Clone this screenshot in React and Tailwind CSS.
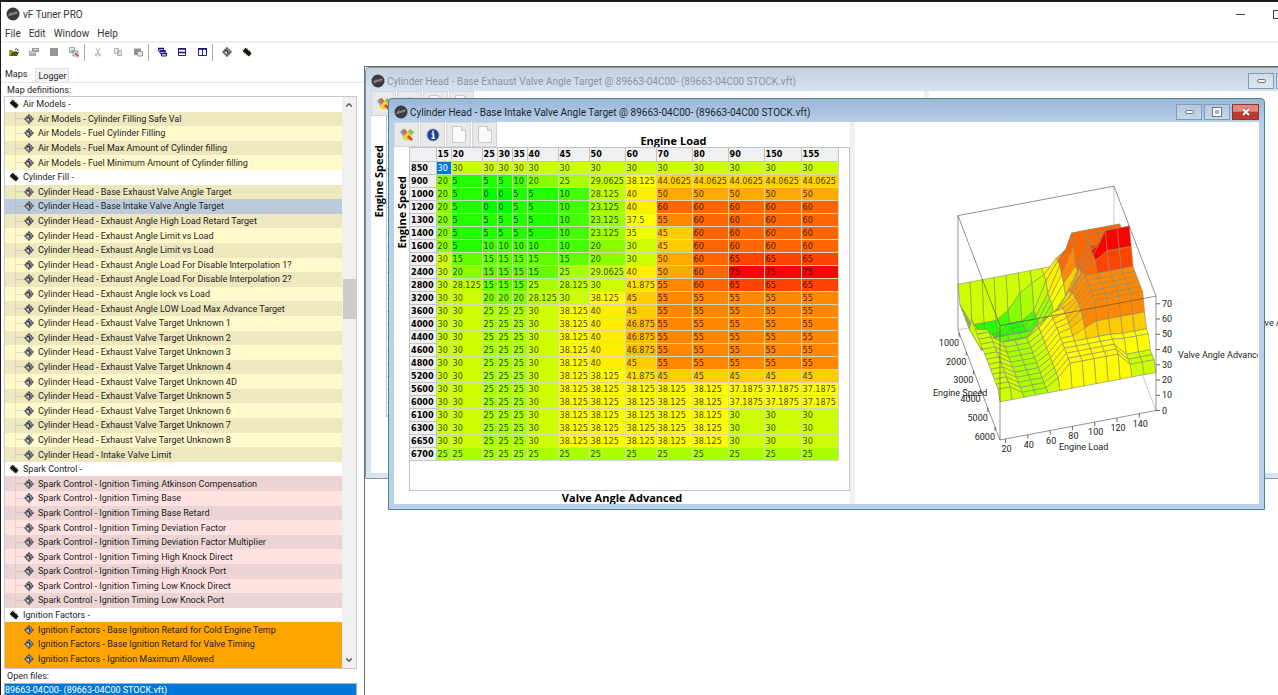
import { ChevronDown, ChevronUp } from 'lucide-react';

const LOADS = [15, 20, 25, 30, 35, 40, 45, 50, 60, 70, 80, 90, 150, 155];

const ROWS = [
    [850, 30, 30, 30, 30, 30, 30, 30, 30, 30, 30, 30, 30, 30, 30],
    [900, 20, 5, 5, 5, 10, 20, 25, 29.0625, 38.125, 44.0625, 44.0625, 44.0625, 44.0625, 44.0625],
    [1000, 20, 5, 0, 0, 5, 5, 10, 28.125, 40, 50, 50, 50, 50, 50],
    [1200, 20, 5, 0, 0, 5, 5, 10, 23.125, 40, 60, 60, 60, 60, 60],
    [1300, 20, 5, 5, 5, 5, 5, 10, 23.125, 37.5, 55, 60, 60, 60, 60],
    [1400, 20, 5, 5, 5, 5, 5, 10, 23.125, 35, 45, 60, 60, 60, 60],
    [1600, 20, 5, 10, 10, 10, 10, 10, 20, 30, 45, 60, 60, 60, 60],
    [2000, 30, 15, 15, 15, 15, 15, 15, 20, 30, 50, 60, 65, 65, 65],
    [2400, 30, 20, 15, 15, 15, 15, 25, 29.0625, 40, 50, 60, 75, 75, 75],
    [2800, 30, 28.125, 15, 15, 15, 25, 28.125, 30, 41.875, 55, 60, 65, 65, 65],
    [3200, 30, 30, 20, 20, 20, 28.125, 30, 38.125, 45, 55, 55, 55, 55, 55],
    [3600, 30, 30, 25, 25, 25, 30, 38.125, 40, 45, 55, 55, 55, 55, 55],
    [4000, 30, 30, 25, 25, 25, 30, 38.125, 40, 46.875, 55, 55, 55, 55, 55],
    [4400, 30, 30, 25, 25, 25, 30, 38.125, 40, 46.875, 55, 55, 55, 55, 55],
    [4600, 30, 30, 25, 25, 25, 30, 38.125, 40, 46.875, 55, 55, 55, 55, 55],
    [4800, 30, 30, 25, 25, 25, 30, 38.125, 40, 45, 55, 55, 55, 55, 55],
    [5200, 30, 30, 25, 25, 25, 30, 38.125, 38.125, 41.875, 45, 45, 45, 45, 45],
    [5600, 30, 30, 25, 25, 25, 30, 38.125, 38.125, 38.125, 38.125, 38.125, 37.1875, 37.1875, 37.1875],
    [6000, 30, 30, 25, 25, 25, 30, 38.125, 38.125, 38.125, 38.125, 38.125, 37.1875, 37.1875, 37.1875],
    [6100, 30, 30, 25, 25, 25, 30, 38.125, 38.125, 38.125, 38.125, 38.125, 30, 30, 30],
    [6300, 30, 30, 25, 25, 25, 30, 38.125, 38.125, 38.125, 38.125, 38.125, 30, 30, 30],
    [6650, 30, 30, 25, 25, 25, 30, 38.125, 38.125, 38.125, 38.125, 38.125, 30, 30, 30],
    [6700, 25, 25, 25, 25, 25, 25, 25, 25, 25, 25, 25, 25, 25, 25],
];

const GROUPS = [
    {
        name: 'Air Models',
        prefix: 'Air Models',
        odd: 'bg-[#ede8bd]',
        even: 'bg-[#fff9cc]',
        items: ['Cylinder Filling Safe Val', 'Fuel Cylinder Filling', 'Fuel Max Amount of Cylinder filling', 'Fuel Minimum Amount of Cylinder filling'],
    },
    {
        name: 'Cylinder Fill',
        prefix: 'Cylinder Head',
        odd: 'bg-[#ede8bd]',
        even: 'bg-[#fff9cc]',
        selected: 1,
        items: [
            'Base Exhaust Valve Angle Target',
            'Base Intake Valve Angle Target',
            'Exhaust Angle High Load Retard Target',
            'Exhaust Angle Limit vs Load',
            'Exhaust Angle Limit vs Load',
            'Exhaust Angle Load For Disable Interpolation 1?',
            'Exhaust Angle Load For Disable Interpolation 2?',
            'Exhaust Angle lock vs Load',
            'Exhaust Angle LOW Load Max Advance Target',
            'Exhaust Valve Target Unknown 1',
            'Exhaust Valve Target Unknown 2',
            'Exhaust Valve Target Unknown 3',
            'Exhaust Valve Target Unknown 4',
            'Exhaust Valve Target Unknown 4D',
            'Exhaust Valve Target Unknown 5',
            'Exhaust Valve Target Unknown 6',
            'Exhaust Valve Target Unknown 7',
            'Exhaust Valve Target Unknown 8',
            'Intake Valve Limit',
        ],
    },
    {
        name: 'Spark Control',
        prefix: 'Spark Control',
        odd: 'bg-[#ecd4d2]',
        even: 'bg-[#ffe3e1]',
        items: [
            'Ignition Timing Atkinson Compensation',
            'Ignition Timing Base',
            'Ignition Timing Base Retard',
            'Ignition Timing Deviation Factor',
            'Ignition Timing Deviation Factor Multiplier',
            'Ignition Timing High Knock Direct',
            'Ignition Timing High Knock Port',
            'Ignition Timing Low Knock Direct',
            'Ignition Timing Low Knock Port',
        ],
    },
    {
        name: 'Ignition Factors',
        prefix: 'Ignition Factors',
        odd: 'bg-[#ffa500]',
        even: 'bg-[#ffa500]',
        items: ['Base Ignition Retard for Cold Engine Temp', 'Base Ignition Retard for Valve Timing', 'Ignition Maximum Allowed'],
    },
];

// green at 0, yellow halfway, red at 75
const heat = (v) => {
    const t = v / 37.5;
    const r = Math.round(Math.min(1, t) * 255);
    const g = Math.round(Math.min(1, 2 - t) * 255);
    return `rgb(${r},${g},0)`;
};

const Logo = () => (
    <svg viewBox="0 0 14 14" className="size-[14px] shrink-0">
        <circle cx="7" cy="7" r="6.5" fill="#3c3c3f" />
        <path d="M2 8.500 Q3 5 5 5.500 T8.500 5 Q11 4 12 5.500 Q11 7.500 8.500 7.500 T4.500 9 Q2.500 9.500 2 8.500Z" fill="#77777b" />
        <path d="M3.500 7.800 L5.500 6.500 L7 7.200 L8.500 6 L11 5.700" stroke="#98989c" strokeWidth=".7" fill="none" />
    </svg>
);

const Chip = () => (
    <svg viewBox="0 0 10 10" className="size-[10px] shrink-0">
        <path d="M3.500 .8 L9.600 6.200 L7 9.400 L.6 4Z" fill="#14140a" />
        <path d="M5 1.400 l1.200 1 M7.200 3.400 l1.200 1 M1.800 5.600 l1.200 1 M4 7.600 l1.200 1" stroke="#6b651c" strokeWidth=".8" />
    </svg>
);

const Target = () => (
    <svg viewBox="0 0 10 10" className="size-[10px] shrink-0">
        <circle cx="5" cy="5" r="3.400" fill="#9c9ca2" stroke="#5a5a5e" strokeWidth="1" />
        <path d="M5 0 V2 M5 8 V10 M0 5 H2.500 M7.500 5 H10" stroke="#4a4a4c" strokeWidth="1.200" />
        <path d="M3 3.400 L5.400 4 L6.200 7" stroke="#2c2c2e" strokeWidth="1.200" fill="none" />
        <circle cx="4.200" cy="5.600" r=".8" fill="#e8e8ec" />
    </svg>
);

const TOOLS = [
    [
        ['Open', <><path d="M0 3h3l1 1h4v1H3L1 9H0z" fill="#a39b2c" /><path d="M3 5h7L8 9H1z" fill="#56530c" /><path d="M6 2.500q2-1.500 3 .5v1" stroke="#333" fill="none" /></>],
        ['Close', <><path d="M0 4h7v5H0z" fill="#ababab" /><path d="M3 1h7v4H7V4H3z" fill="#999" /><path d="M1.500 5.500h4M4.500 2.500h4" stroke="#e8e8e8" /></>],
        ['Save', <path d="M1 1h8v8H1z" fill="#969696" />],
        ['Compare', <><path d="M.5.5h5v5h-5z" fill="#dfeee8" stroke="#6aa39a" strokeWidth=".8" /><path d="M4 4h5v5H4z" fill="#e3d8ea" stroke="#8c7dac" strokeWidth=".8" /><path d="M6 6l3.500 3.500" stroke="#d23a3a" strokeWidth="1.400" /><path d="M2 4h3" stroke="#3aa655" /></>],
    ],
    [
        ['Cut', <><path d="M3 1l3 6M7 1L4 7" stroke="#b0b0b0" /><circle cx="3.200" cy="8" r="1" fill="none" stroke="#b0b0b0" /><circle cx="6.800" cy="8" r="1" fill="none" stroke="#b0b0b0" /></>],
        ['Copy', <><path d="M1.500 1.500h4v5h-4zM4.500 3.500h4v5h-4z" fill="#efefef" stroke="#adadad" /><path d="M5.500 5.500h2M5.500 7h2" stroke="#bbb" strokeWidth=".6" /></>],
        ['Paste', <><path d="M1 1.500h7v6.500H1z" fill="#8f8f8f" /><path d="M4.500 4.500h5v4.500h-5z" fill="#e8e8e8" stroke="#9a9a9a" /></>],
    ],
    [
        ['Cascade', <><path d="M1.500 1.500h5v2.500h-5zM3 4h5v2.500H3zM4.500 6.500h5V9h-5z" fill="#dfe3f5" stroke="#22228a" /><path d="M1 1.500h6M3 4h6M4 6.500h6" stroke="#14148a" strokeWidth="1.400" /></>],
        ['Tile horizontally', <><path d="M1.500 1.500h7v7h-7z" fill="#fff" stroke="#22228a" /><path d="M1 2h8M1 5.500h8" stroke="#14148a" strokeWidth="1.600" /></>],
        ['Tile vertically', <><path d="M1.500 1.500h8v7h-8zM5.500 1.500v7" fill="#fff" stroke="#22228a" /><path d="M1 2h9" stroke="#14148a" strokeWidth="1.600" /></>],
    ],
];

const Toolbar = () => (
    <div className="flex h-[25px] items-center border-t-2 border-[#f0f0f0] pb-[5px] pl-[3px]">
        {TOOLS.map((group, g) => (
            <div key={g} className="flex items-center">
                {group.map(([label, art]) => (
                    <button key={label} aria-label={label} className="flex w-5 justify-center">
                        <svg viewBox="0 0 10 10" className="size-[10px]" fill="none">{art}</svg>
                    </button>
                ))}
                <span className="mr-[3px] h-[17px] w-px bg-[#a8a8a8]" />
            </div>
        ))}
        <button aria-label="Maps" className="ml-px flex w-5 justify-center"><Target /></button>
        <button aria-label="ECU" className="flex w-5 justify-center"><Chip /></button>
    </div>
);

const MapTree = () => (
    <div className="mr-[7px] ml-[3px] flex min-h-0 flex-1 border border-[#c3cbd3]">
        <ul className="flex flex-1 flex-col overflow-hidden">
            {GROUPS.map((group) => [
                <li key={group.name} className="flex min-h-0 flex-1 items-center gap-1 pl-1">
                    <Chip />
                    <button>{group.name} -</button>
                </li>,
                ...group.items.map((item, i) => (
                    <li
                        key={group.name + i}
                        className={`flex min-h-0 flex-1 items-center pl-[10px] ${i === group.selected ? 'bg-[#bccbdc]' : i % 2 ? group.even : group.odd}`}
                    >
                        <span className="h-full w-px bg-gray-400/20" />
                        <span className="h-px w-2 bg-gray-400/30" />
                        <Target />
                        <button className="ml-1 text-left whitespace-nowrap">{group.prefix} - {item}</button>
                    </li>
                )),
            ])}
            <li className="h-[2px] bg-[#ffa500]" />
        </ul>
        <div className="flex w-[14px] flex-col items-center bg-[#f0f0f0]">
            <button aria-label="Scroll up" className="flex h-4 items-center"><ChevronUp size={10} strokeWidth={3} color="#555" /></button>
            <div className="flex-[166]" />
            <div className="w-[13px] flex-[40] bg-[#cdcdcd]" />
            <div className="flex-[332]" />
            <button aria-label="Scroll down" className="flex h-4 items-center"><ChevronDown size={10} strokeWidth={3} color="#555" /></button>
        </div>
    </div>
);

const Sidebar = () => (
    <aside className="flex w-[363px] shrink-0 flex-col text-[9px] leading-[12px] text-[#1d1d1d]">
        <div className="flex items-end">
            <button className="h-4 px-1">Maps</button>
            <button className="ml-1 h-[14px] border border-b-0 border-[#e0e0e0] bg-[#f3f3f3] px-[2px]">Logger</button>
        </div>
        <div className="border-t border-[#e3e7ea] pt-px pl-[6px]">Map definitions:</div>
        <MapTree />
        <div className="flex h-[14px] items-center pl-[6px]">Open files:</div>
        <ul className="mr-[7px] ml-[3px] border border-b-0 border-[#9cb6cf]">
            <li className="h-[11px] bg-[#0078d7] text-white"><button>89663-04C00- (89663-04C00 STOCK.vft)</button></li>
        </ul>
    </aside>
);

const MapTools = () => (
    <div className="flex shrink-0 gap-px">
        <button aria-label="Colours" className="flex size-[25px] items-center justify-center border border-[#d6d6d6] bg-[#e9e9e9]">
            <svg viewBox="0 0 16 16" className="size-4">
                <path d="M1 5l3-3 5 7-3 3z" fill="#6aa8dc" />
                <path d="M3 3l3-1 6 8-3 3z" fill="#e8642c" />
                <path d="M11 2l4 3-7 9-5-3z" fill="#f6d02a" />
                <path d="M11 2l4 3-2 3-4-3z" fill="#7cc46a" />
                <path d="M10 8l4 4-2 2-4-4z" fill="#e0482a" />
            </svg>
        </button>
        <button aria-label="Info" className="flex size-[25px] items-center justify-center border border-[#d6d6d6] bg-[#e9e9e9]">
            <svg viewBox="0 0 14 14" className="size-[14px]">
                <circle cx="7" cy="7" r="6" fill="#1f3f8f" stroke="#8398c4" />
                <path d="M7 2.800v2M5.500 6H7.500V10M5.500 10.300H8.800" stroke="#fff" strokeWidth="1.600" fill="none" />
            </svg>
        </button>
        {['New', 'Blank'].map((label) => (
            <button key={label} aria-label={label} className="flex size-[25px] items-center justify-center border border-[#d6d6d6] bg-[#e9e9e9]">
                <svg viewBox="0 0 14 17" className="h-[17px] w-[14px]">
                    <path d="M.5.5H9.500L13.500 4.500V16.500H.5z" fill="#fafafa" stroke="#c9c9c9" />
                    <path d="M9.500.5V4.500H13.500" fill="#e5e5e5" stroke="#c9c9c9" />
                </svg>
            </button>
        ))}
    </div>
);

const MapTable = () => (
    <table className="table-fixed border-collapse font-['DejaVu_Sans_Condensed','Open_Sans',sans-serif] text-[9px] leading-[12px] text-black/75">
        <colgroup>
            <col className="w-[26px]" />
            <col className="w-[15px]" />
            <col className="w-[31px]" />
            <col className="w-[15px]" />
            <col className="w-[15px]" />
            <col className="w-[15px]" />
            <col className="w-[31px]" />
            <col className="w-[31px]" />
            <col className="w-[36px]" />
            <col className="w-[31px]" />
            <col className="w-[36px]" />
            <col className="w-[36px]" />
            <col className="w-[36px]" />
            <col className="w-[37px]" />
            <col className="w-[37px]" />
        </colgroup>
        <thead>
            <tr className="h-[13px] bg-[#f0f0f0] text-left text-black">
                <th className="border border-t-0 border-l-0 border-[#c4c4c4] p-0" />
                {LOADS.map((load) => (
                    <th key={load} scope="col" className="border border-t-0 border-[#c4c4c4] p-0 pl-px">{load}</th>
                ))}
            </tr>
        </thead>
        <tbody>
            {ROWS.map(([speed, ...cells], r) => (
                <tr key={speed} className="h-[13px]">
                    <th scope="row" className="border border-l-0 border-[#c4c4c4] bg-[#f0f0f0] p-0 pl-px text-left text-black">{speed}</th>
                    {cells.map((v, c) => (
                        <td
                            key={c}
                            className="border border-[#d3d8b8] p-0 pl-px"
                            style={r || c ? { backgroundColor: heat(v) } : { backgroundColor: '#0078d7', color: '#fff' }}
                        >
                            {v}
                        </td>
                    ))}
                </tr>
            ))}
        </tbody>
    </table>
);

// c runs along engine load, r from the back (850) to the front (6700)
const project = (c, r, v) => [103 + c * 156 + r * 42, 208 - c * 29.5 + r * 110 - v * 1.525];

const Surface = () => {
    const last = ROWS.length - 1;
    const quads = [];
    for (let r = 0; r < last; r++) {
        for (let c = LOADS.length - 2; c >= 0; c--) {
            const corners = [[c, r], [c + 1, r], [c + 1, r + 1], [c, r + 1]];
            const values = corners.map(([x, y]) => ROWS[y][x + 1]);
            const points = corners.map(([x, y], i) => project(x / 13, y / last, values[i]).join()).join(' ');
            quads.push(<polygon key={`${r}-${c}`} points={points} fill={heat(Math.max(...values))} />);
        }
    }
    const line = (...pts) => pts.map((p) => project(...p).join()).join(' ');

    return (
        <svg viewBox="0 0 403 382" className="w-[403px] shrink-0 text-[9px]" fill="#222">
            <g fill="none" stroke="#bdbdbd" strokeWidth=".8">
                <polyline points={line([0, 0, 0], [1, 0, 0], [1, 1, 0])} />
                <polyline points={line([1, 0, 0], [1, 0, 75])} />
            </g>
            <g stroke="#8a8a70" strokeWidth=".6" strokeLinejoin="round">{quads}</g>
            <g fill="none" stroke="#4a4a4a" strokeOpacity=".75" strokeWidth=".8">
                <polyline points={line([0, 0, 0], [0, 0, 75], [1, 0, 75], [1, 1, 75], [0, 1, 75], [0, 0, 75])} />
                <polyline points={line([0, 1, 75], [0, 1, 0], [1, 1, 0], [1, 1, 75])} />
                <polyline points={line([0, 0, 0], [0, 1, 0])} />
            </g>
            {[0, 10, 20, 30, 40, 50, 60, 70].map((v) => {
                const [x, y] = project(1, 1, v);
                return (
                    <g key={v}>
                        <path d={`M${x} ${y}h4`} stroke="#444" strokeWidth=".8" />
                        <text x={x + 6} y={y + 3}>{v}</text>
                    </g>
                );
            })}
            {[20, 40, 60, 80, 100, 120, 140].map((v) => {
                const [x, y] = project((v - 15) / 140, 1, 0);
                return (
                    <g key={v}>
                        <path d={`M${x} ${y}v4`} stroke="#444" strokeWidth=".8" />
                        <text x={x + 1} y={y + 13} textAnchor="middle">{v}</text>
                    </g>
                );
            })}
            {[1000, 2000, 3000, 4000, 5000, 6000].map((v) => {
                const [x, y] = project(0, (v - 850) / 5850, 0);
                return (
                    <g key={v}>
                        <path d={`M${x} ${y}v4`} stroke="#444" strokeWidth=".8" />
                        <text x={x} y={y + 13} textAnchor="end">{v}</text>
                    </g>
                );
            })}
            <text x="78" y="274">Engine Speed</text>
            <text x="204" y="328">Engine Load</text>
            <text x="323" y="236">Valve Angle Advanced</text>
        </svg>
    );
};

const WindowButtons = ({ active }) => (
    <div className="ml-auto flex gap-[2px]">
        <button aria-label="Minimize" className="flex h-4 w-[26px] items-center justify-center border border-[#7f9cba] bg-white/20">
            <span className="h-[4px] w-[9px] rounded-xs border border-[#777] bg-white" />
        </button>
        <button aria-label="Maximize" className="flex h-4 w-[26px] items-center justify-center border border-[#7f9cba] bg-white/20">
            <span className="size-[8px] border-2 border-white bg-[#9db6d2] outline outline-[#777]" />
        </button>
        <button
            aria-label="Close"
            className={`flex h-4 w-[27px] items-center justify-center border ${active ? 'border-[#8a3a30] bg-linear-to-b from-[#dd8a7c] from-45% to-[#c0392b] to-50%' : 'border-[#7f9cba] bg-white/20'}`}
        >
            <svg viewBox="0 0 10 8" className="h-2 w-[10px]">
                <path d="M2 1l6 6M8 1L2 7" stroke="#6b3c3c" strokeWidth="3" />
                <path d="M2 1l6 6M8 1L2 7" stroke="#fff" strokeWidth="2" />
            </svg>
        </button>
    </div>
);

const MapWindow = ({ title, active, className, children }) => (
    <section
        className={`absolute flex flex-col rounded-t border px-[5px] pb-[5px] ${active ? 'border-[#4b8592] bg-linear-to-b from-[#9ab7d6] to-[#b9d0ea] to-[24px]' : 'border-[#8d949b] bg-linear-to-b from-[#c3d0de] to-[#d7e3f1] to-[24px]'} ${className}`}
    >
        <header className="flex h-[23px] shrink-0 items-center gap-[2px] pt-[3px]">
            <Logo />
            <h2 className={`text-[10px] ${active ? 'text-[#1b2733]' : 'text-[#8b97a4]'}`}>{title}</h2>
            <WindowButtons active={active} />
        </header>
        <div className="flex flex-1 overflow-hidden bg-white">{children}</div>
    </section>
);

const AxisLabel = () => (
    <div className="w-[15px] shrink-0 pt-[29px]">
        <span className="block rotate-180 font-['Open_Sans',sans-serif] text-[11px] leading-[15px] font-bold whitespace-nowrap text-black [writing-mode:vertical-rl]">Engine Speed</span>
    </div>
);

const App = () => (
    <div className="flex h-screen flex-col overflow-hidden border-t-2 border-l border-[#1c1c22] bg-white font-['Roboto','Open_Sans',sans-serif]">
        <header className="flex h-[24px] shrink-0 items-center gap-[3px] pl-[5px] text-[10px] text-[#333]">
            <Logo />
            <h1>vF Tuner PRO</h1>
            <div className="-mr-1 ml-auto flex items-center gap-7 text-[#444]">
                <button aria-label="Minimize app" className="flex h-4 w-[9px] items-center"><span className="h-px w-full bg-current" /></button>
                <button aria-label="Maximize app" className="size-[9px] border border-current" />
            </div>
        </header>
        <nav className="flex h-[15px] shrink-0 items-center gap-2 pl-1 text-[10px] text-[#333]">
            {['File', 'Edit', 'Window', 'Help'].map((item) => <button key={item}>{item}</button>)}
        </nav>
        <Toolbar />
        <div className="flex min-h-0 flex-1">
            <Sidebar />
            <main className="relative flex-1 overflow-hidden border-t border-l border-[#6e6e6e]">
                <MapWindow title="Cylinder Head - Base Exhaust Valve Angle Target @ 89663-04C00- (89663-04C00 STOCK.vft)" className="top-0 left-0 h-[412px] w-[972px]">
                    <div className="flex w-[553px] shrink-0 flex-col">
                        <MapTools />
                        <div className="flex">
                            <AxisLabel />
                            <div className="flex-1 border border-[#b9c6d3]">
                                {ROWS.map(([speed]) => <div key={speed} className="h-[13px] border-b border-[#c4c4c4]" />)}
                            </div>
                        </div>
                    </div>
                    <div className="w-[5px] shrink-0 bg-[#f0f0f0]" />
                    <div className="flex flex-1 items-center pt-[84px] pl-[323px] text-[9px] whitespace-nowrap text-[#222]">Valve Angle Advanced</div>
                </MapWindow>
                <MapWindow active title="Cylinder Head - Base Intake Valve Angle Target @ 89663-04C00- (89663-04C00 STOCK.vft)" className="top-[31px] left-[23px] w-[877px]">
                    <div className="flex w-[456px] shrink-0 flex-col font-['Open_Sans',sans-serif]">
                        <div className="flex">
                            <MapTools />
                            <h3 className="flex-1 self-end text-center text-[11px] leading-[12px] font-bold">Engine Load</h3>
                        </div>
                        <div className="flex flex-1">
                            <AxisLabel />
                            <div className="flex-1 border border-[#b9c6d3]"><MapTable /></div>
                        </div>
                        <h3 className="text-center text-[11px] leading-[13px] font-bold">Valve Angle Advanced</h3>
                    </div>
                    <div className="w-[5px] shrink-0 bg-[#f0f0f0]" />
                    <Surface />
                </MapWindow>
            </main>
        </div>
    </div>
);

export default App;
